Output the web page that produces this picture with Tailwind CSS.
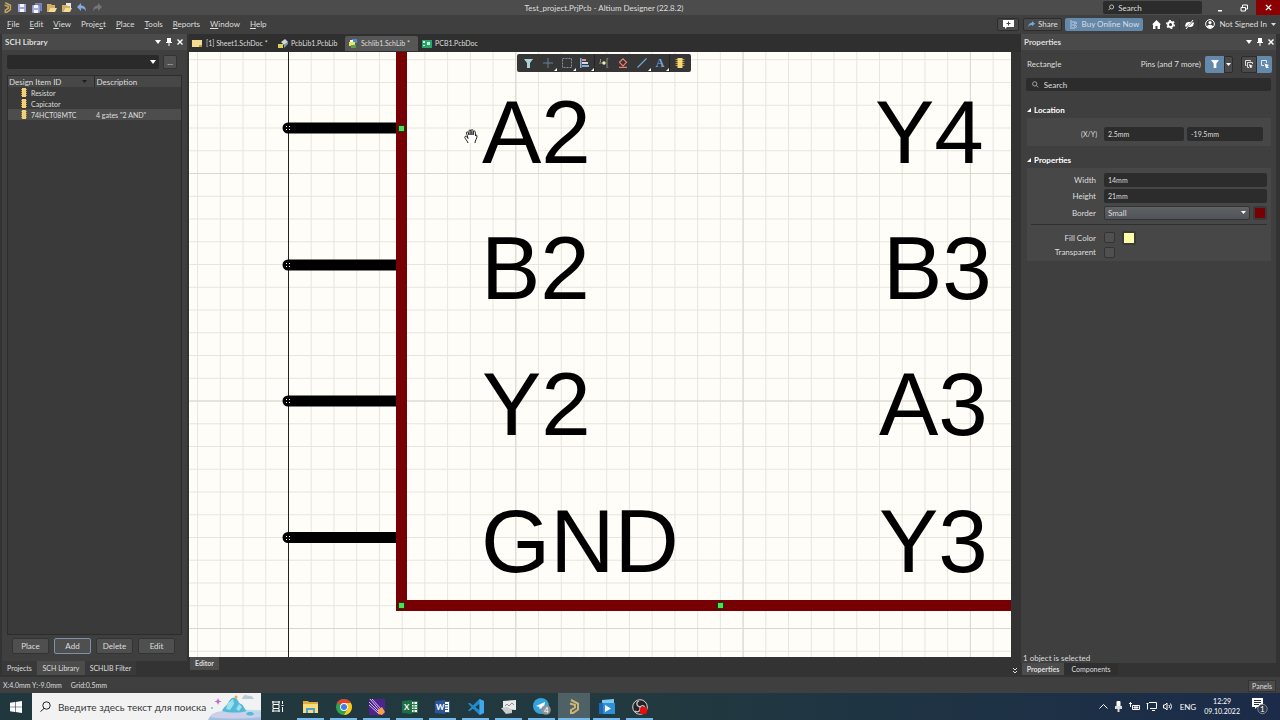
<!DOCTYPE html>
<html lang="en">
<head>
  <meta charset="UTF-8" />
  <meta name="viewport" content="width=device-width, initial-scale=1.0"/>
  <title>Test_project.PrjPcb - Altium Designer (22.8.2)</title>
  <script src="https://cdn.jsdelivr.net/npm/@tailwindcss/browser@4"></script>
</head>
<body class="flex h-screen flex-col overflow-hidden bg-[#3c3c3c] font-['Lato','Open_Sans',sans-serif] text-[8px] leading-[10px] text-[#dedede]">

  <!-- Title bar -->
  <header class="relative flex h-[15px] shrink-0 items-center bg-[#4c4c4c]">
    <div class="flex items-center gap-[5px] pl-[3px]">
      <svg class="h-[11px] w-[9px]" viewBox="0 0 12 15" fill="none" stroke="#c4a95c" stroke-width="2"><path d="M3 1l7 3.500v6L5 14H3v-3l4-2.500V6L2 4.500"/></svg>
      <button aria-label="Save"><svg class="size-[10px]" viewBox="0 0 10 10"><path fill="#a3a9dc" d="M1 1h8v8H1z"/><path fill="#f4f4fa" d="M3 1h4v3H3zM3 6h4v3H3z"/></svg></button>
      <button aria-label="Save all"><svg class="size-[10px]" viewBox="0 0 10 10"><path fill="#7d84c4" d="M3 0h7v8H3z"/><path fill="#a9aee2" stroke="#4c4c4c" stroke-width=".4" d="M0 2h8v8H0z"/><path fill="#f4f4fa" d="M2 2h4v3H2zM2 7h4v3H2z"/></svg></button>
      <button aria-label="Open"><svg class="size-[10px]" viewBox="0 0 10 10"><path fill="#d2b163" d="M0 1h4l1 1h3v3H3L1 9H0z"/><path fill="#f6dc93" d="M3 5h7L8 9H1z"/></svg></button>
      <button aria-label="Open project"><svg class="size-[10px]" viewBox="0 0 10 10"><path fill="#e8e8e8" d="M4 0h5v5H4z"/><path fill="#d2b163" d="M0 2h4l1 1h3v2H3L1 9H0z"/><path fill="#f6dc93" d="M3 5h7L8 9H1z"/></svg></button>
      <button aria-label="Undo"><svg class="size-[10px]" viewBox="0 0 10 10"><path fill="#7fabdf" d="M0 4l4-4v2.500c3 0 5 2 5 6C8 6 6.500 5.300 4 5.300V8z"/></svg></button>
      <button aria-label="Redo"><svg class="size-[10px]" viewBox="0 0 10 10"><path fill="#757575" d="M10 4L6 0v2.500c-3 0-5 2-5 6 1-2.500 2.500-3.200 5-3.200V8z"/></svg></button>
    </div>
    <h1 class="absolute inset-x-0 pr-[72px] text-center">Test_project.PrjPcb - Altium Designer (22.8.2)</h1>
    <div class="relative ml-auto flex h-full items-center">
      <label class="mr-[6px] flex h-[13px] w-[99px] items-center gap-[4px] rounded-xs bg-[#2c2c2c] px-[5px]">
        <svg class="size-[7px]" viewBox="0 0 8 8" fill="none" stroke="#dedede"><circle cx="4.700" cy="3.300" r="2.600"/><path d="M3 5L.5 7.500"/></svg>
        <input type="text" aria-label="Search application" placeholder="Search" class="w-full min-w-0 outline-none placeholder:text-[#dedede]">
      </label>
      <button aria-label="Minimize" class="flex h-full w-[24px] items-center justify-center"><svg class="size-[8px]" viewBox="0 0 8 8"><path fill="#fff" d="M2 6h4v1.500H2z"/></svg></button>
      <button aria-label="Restore" class="flex h-full w-[24px] items-center justify-center"><svg class="size-[8px]" viewBox="0 0 8 8" fill="none" stroke="#fff"><path d="M2.500 3V1h5v4H6M1 3.500h4.500V7H1z"/></svg></button>
      <button aria-label="Close" class="flex h-full w-[24px] items-center justify-center bg-[#8b0000]"><svg class="size-[7px]" viewBox="0 0 8 8" stroke="#fff" stroke-width="1.600"><path d="M1 1l6 6M7 1L1 7"/></svg></button>
    </div>
  </header>

  <!-- Menu bar -->
  <div class="flex h-[19px] shrink-0 items-center justify-between bg-[#3f3f3f]">
    <nav class="flex gap-[10px] pb-[2px] pl-[7px]">
      <a href="#"><u>F</u>ile</a>
      <a href="#"><u>E</u>dit</a>
      <a href="#"><u>V</u>iew</a>
      <a href="#">Proje<u>c</u>t</a>
      <a href="#"><u>P</u>lace</a>
      <a href="#"><u>T</u>ools</a>
      <a href="#"><u>R</u>eports</a>
      <a href="#"><u>W</u>indow</a>
      <a href="#"><u>H</u>elp</a>
    </nav>
    <div class="flex items-center pb-px">
      <button aria-label="Comments" class="flex h-[13px] w-[22px] items-center justify-center rounded-xs border border-[#2c2c2c] bg-[#4a4a4a]"><svg class="h-[9px] w-[11px]" viewBox="0 0 11 9"><path fill="#fff" d="M0 0h11v7H4L2 9V7H0z"/><path stroke="#444" d="M5.500 1.500v4M3.500 3.500h4"/></svg></button>
      <button class="ml-[4px] flex h-[13px] w-[39px] items-center justify-center gap-[3px] rounded-xs border border-[#2c2c2c] bg-[#4a4a4a]"><svg class="size-[7px]" viewBox="0 0 8 8"><path fill="#6ba7e0" d="M8 3L4.500 0v2C2 2 .5 4 0 7c1.500-2 2.500-2.500 4.500-2.500V6z"/></svg>Share</button>
      <button class="ml-[3px] flex h-[13px] w-[78px] items-center justify-center gap-[5px] rounded-xs bg-[#6589ab]"><svg class="h-[9px] w-[7px]" viewBox="0 0 7 9" fill="none" stroke="#b9cbdc"><path d="M1 0v9M2 2h3M2 5h3M2 8h3"/><circle cx="5.500" cy="3" r="1"/><circle cx="5.500" cy="6.500" r="1"/></svg>Buy Online Now</button>
      <button aria-label="Home" class="ml-[9px]"><svg class="size-[9px]" viewBox="0 0 9 9"><path fill="#fff" d="M4.500 0L9 4.500H8V9H5.500V6h-2v3H1V4.500H0z"/></svg></button>
      <button aria-label="Settings" class="ml-[5px]"><svg class="size-[9px]" viewBox="0 0 9 9" fill="none" stroke="#fff"><circle cx="4.500" cy="4.500" r="2.500" stroke-width="1.800"/><circle cx="4.500" cy="4.500" r="3.900" stroke-width="1.200" stroke-dasharray="2 2.080"/></svg></button>
      <span class="ml-[4px] h-[11px] w-px bg-[#333]"></span>
      <button aria-label="Extensions" class="ml-[5px]"><svg class="size-[9px]" viewBox="0 0 9 9"><path fill="#fff" d="M0 6l1-3 2-1h3L1 7zM9 3L8 6 6 7H3l5-5z"/><path stroke="#fff" d="M1 9l7-9"/></svg></button>
      <span class="ml-[4px] h-[11px] w-px bg-[#333]"></span>
      <button class="ml-[6px] flex items-center gap-[4px] pr-[4px]"><svg class="size-[10px]" viewBox="0 0 10 10"><circle cx="5" cy="5" r="4.400" fill="none" stroke="#fff"/><circle cx="5" cy="3.600" r="1.600" fill="#fff"/><path fill="#fff" d="M2 8c0-3 6-3 6 0L5 9.500z"/></svg>Not Signed In<svg class="h-[3px] w-[5px]" viewBox="0 0 5 3"><path fill="#dedede" d="M0 0h5L2.500 3z"/></svg></button>
    </div>
  </div>

  <main class="flex min-h-0 flex-1 bg-[#333333]">

    <!-- SCH Library panel -->
    <aside class="flex w-[187px] shrink-0 flex-col pl-[2px]">
      <div class="flex min-h-0 flex-1 flex-col bg-[#3f3f3f]">
        <div class="flex h-[16px] items-center gap-[5px] bg-[#4a4a4a] pr-[4px] pl-[3px]">
          <h2 class="mr-auto font-bold">SCH Library</h2>
          <button aria-label="Panel menu"><svg class="h-[4px] w-[6px]" viewBox="0 0 6 4"><path fill="#fff" d="M0 0h6L3 4z"/></svg></button>
          <button aria-label="Pin panel"><svg class="h-[8px] w-[6px]" viewBox="0 0 6 8"><path fill="#fff" d="M1 0h4v4h1v1H0V4h1zM2.500 5h1v3h-1z"/></svg></button>
          <button aria-label="Close panel"><svg class="size-[6px]" viewBox="0 0 6 6" stroke="#fff" stroke-width="1.400"><path d="M.5.5l5 5M5.500.5l-5 5"/></svg></button>
        </div>
        <div class="flex gap-[4px] px-[5px] pt-[5px]">
          <div class="relative h-[14px] w-[152px]">
            <select aria-label="Filter" class="size-full appearance-none rounded-xs bg-[#2a2a2a]"><option></option></select>
            <svg class="pointer-events-none absolute top-[5px] right-[3px] h-[4px] w-[6px]" viewBox="0 0 6 4"><path fill="#fff" d="M0 0h6L3 4z"/></svg>
          </div>
          <button class="h-[14px] w-[14px] rounded-xs border border-[#333] bg-[#505050]">...</button>
        </div>
        <div class="mx-[5px] mt-[6px] min-h-0 flex-1 border border-[#2c2c2c] bg-[#3a3a3a]">
          <table class="w-full table-fixed border-collapse text-left">
            <thead class="bg-[#474747]">
              <tr class="h-[11px]">
                <th class="w-[86px] p-0 pl-px font-normal"><span class="flex items-center justify-between pr-[7px]">Design Item ID<svg class="h-[3px] w-[5px]" viewBox="0 0 5 3"><path fill="#1c1c1c" d="M0 0h5L2.500 3z"/></svg></span></th>
                <th class="border-l border-[#2c2c2c] p-0 pl-[2px] font-normal">Description</th>
              </tr>
            </thead>
            <tbody id="components"></tbody>
          </table>
        </div>
        <div class="flex gap-[5px] py-[3px] pl-[10px]">
          <button class="h-[16px] w-[37px] rounded-xs border border-[#333] bg-[#4f4f4f]">Place</button>
          <button class="h-[16px] w-[37px] rounded-xs border border-[#7d92a8] bg-[#4f4f4f]">Add</button>
          <button class="h-[16px] w-[37px] rounded-xs border border-[#333] bg-[#4f4f4f]">Delete</button>
          <button class="h-[16px] w-[37px] rounded-xs border border-[#333] bg-[#4f4f4f]">Edit</button>
        </div>
        <div class="h-[4px]"></div>
      </div>
      <nav class="flex h-[16px] items-start text-[7px] leading-[14px]">
        <a href="#" class="w-[35px] bg-[#393939] text-center">Projects</a>
        <a href="#" class="w-[48px] bg-[#4c4c4c] text-center">SCH Library</a>
        <a href="#" class="w-[51px] bg-[#393939] text-center">SCHLIB Filter</a>
      </nav>
    </aside>

    <!-- Document area -->
    <section class="ml-[2px] flex min-w-0 flex-1 flex-col">
      <nav class="flex h-[18px] shrink-0 items-end bg-[#2f2f2f] text-[7px] leading-[15px]">
        <a href="#" class="mb-px flex w-[83px] items-center gap-[4px] pl-[3px]"><svg class="h-[7px] w-[10px]" viewBox="0 0 10 7"><path fill="#f3dc8b" d="M0 0h10v7H0z"/><path fill="#b99c4c" d="M7 5h3v2H7z"/></svg>[1] Sheet1.SchDoc *</a>
        <a href="#" class="mb-px flex w-[73px] items-center gap-[3px] pl-[6px]"><svg class="size-[10px]" viewBox="0 0 10 10"><path fill="#cfd6d8" d="M3 3l4-3 3 3-4 3z"/><path fill="#7f9aa0" d="M6 6l4-3v2L6 9z"/><path fill="#d9cf58" d="M0 5h5v4H0z"/></svg>PcbLib1.PcbLib</a>
        <a href="#" class="mb-px flex w-[73px] items-center gap-[3px] rounded-t-xs bg-[#565656] pl-[4px]"><svg class="size-[9px]" viewBox="0 0 9 9"><path fill="#4e8bd0" d="M3 0h5v4H3z"/><path fill="#ece45f" d="M0 3h6v4H0z"/><path fill="#56a04e" d="M2 6h5v3H2z"/><path fill="#fff" d="M1 1h3v2H1z"/></svg>Schlib1.SchLib *</a>
        <a href="#" class="mb-px flex items-center gap-[3px] pl-[4px]"><svg class="h-[8px] w-[10px]" viewBox="0 0 10 8"><path fill="#27a56a" d="M0 0h10v8H0z"/><path fill="#c6f0dc" d="M1 1h2v2H1zM5 2h3v3H5zM1 5h2v1H1z"/></svg>PCB1.PcbDoc</a>
      </nav>
      <div class="relative mr-[10px] min-h-0 flex-1 bg-[#fefdf8]">
        <!-- Schematic sheet -->
        <svg class="block size-full font-['Liberation_Sans',sans-serif]">
          <defs>
            <pattern id="minor" x="99" y="121" width="22.730" height="22.750" patternUnits="userSpaceOnUse"><path d="M0 .5h23M.5 0v23" stroke="#e9e5de" fill="none"/></pattern>
            <pattern id="major" x="99" y="121" width="227.300" height="227.500" patternUnits="userSpaceOnUse"><path d="M0 .5h228M.5 0v228" stroke="#dad7d0" fill="none"/></pattern>
          </defs>
          <rect width="100%" height="100%" fill="url(#minor)"/>
          <rect width="100%" height="100%" fill="url(#major)"/>
          <rect x="99" width="1" height="100%" fill="#222"/>
          <g stroke="#000" stroke-width="11" stroke-linecap="round">
            <path d="M99 76h108M99 213h108M99 349h108M99 485.500h108"/>
          </g>
          <g fill="#fff">
            <path d="M97 74h1v1h-1zm3 0h1v1h-1zm-3 3h1v1h-1zm3 0h1v1h-1z"/>
            <path d="M97 211h1v1h-1zm3 0h1v1h-1zm-3 3h1v1h-1zm3 0h1v1h-1z"/>
            <path d="M97 347h1v1h-1zm3 0h1v1h-1zm-3 3h1v1h-1zm3 0h1v1h-1z"/>
            <path d="M97 484h1v1h-1zm3 0h1v1h-1zm-3 3h1v1h-1zm3 0h1v1h-1z"/>
          </g>
          <path fill="#760003" d="M207 0h11v548h2000v11H207z"/>
          <g fill="#4fe052" stroke="#123c10">
            <rect x="209.500" y="73.500" width="6" height="6"/>
            <rect x="209.500" y="550.500" width="6" height="6"/>
            <rect x="528.500" y="550.500" width="6" height="6"/>
          </g>
          <g font-size="89">
            <text x="293" y="111">A2</text>
            <text x="292" y="247">B2</text>
            <text x="293" y="383">Y2</text>
            <text x="292" y="520">GND</text>
            <text x="686" y="111">Y4</text>
            <text x="694" y="247">B3</text>
            <text x="690" y="383">A3</text>
            <text x="690" y="520">Y3</text>
          </g>
          <!-- Pan cursor -->
          <path transform="translate(275 77)" fill="#fff" stroke="#222" d="M4 14C3 11 0 9 1 7.500c1-.8 2 .5 3 2L2.500 4c0-1.500 1.500-1.500 2 0L5 6V2c0-1.500 2-1.500 2 0v4-4.500c.5-1.300 2-1 2 0V6l.5-3.500c.5-1 2-.5 1.800.7L11.500 7c.5-1.200 1.500-1 1.500 0 0 3-2 4-2 7"/>
        </svg>

        <!-- Active bar floating over the sheet -->
        <div class="absolute top-[2px] left-1/2 flex h-[18px] -translate-x-[83px] items-center rounded-xs bg-[#363636] px-[2px]">
          <button aria-label="Filter" class="flex h-[18px] w-[19px] items-center justify-center"><svg class="size-[9px]" viewBox="0 0 9 9"><path fill="#a8d4d8" d="M0 0h9L6 4v5H3V4z"/></svg></button>
          <button aria-label="Move" class="relative flex h-[18px] w-[19px] items-center justify-center"><svg class="size-[10px]" viewBox="0 0 10 10" stroke="#62829f"><path d="M5 0v10M0 5h10"/></svg><i class="absolute right-0 bottom-px size-[3px] bg-white [clip-path:polygon(100%_0,100%_100%,0_100%)]"></i></button>
          <button aria-label="Select" class="relative flex h-[18px] w-[19px] items-center justify-center"><svg class="size-[10px]" viewBox="0 0 10 10" fill="none" stroke="#7f92a5" stroke-dasharray="2 1"><path d="M.5.5h9v9h-9z"/></svg><i class="absolute right-0 bottom-px size-[3px] bg-white [clip-path:polygon(100%_0,100%_100%,0_100%)]"></i></button>
          <button aria-label="Align" class="relative flex h-[18px] w-[19px] items-center justify-center border-r border-[#242424]"><svg class="size-[10px]" viewBox="0 0 10 10"><path fill="#86aede" d="M0 0h1.500v10H0zM2 7h7v2H2z"/><path fill="#e58a97" d="M2 1h4v2H2z"/><path fill="#d7d9e8" d="M2 4h6v2H2z"/></svg><i class="absolute right-0 bottom-px size-[3px] bg-white [clip-path:polygon(100%_0,100%_100%,0_100%)]"></i></button>
          <button aria-label="Place pin" class="flex h-[18px] w-[18px] items-center justify-center"><svg class="size-[10px]" viewBox="0 0 10 10" fill="none" stroke="#8d8d82"><path d="M0 5h5M9.500 0H8v10h1.500M1.500 1v3"/><circle cx="5" cy="5" r="1.700" fill="#f5efa8" stroke="none"/></svg></button>
          <button aria-label="IEEE symbol" class="flex h-[18px] w-[19px] items-center justify-center"><svg class="size-[10px]" viewBox="0 0 10 10" fill="none" stroke="#ef7d6c" stroke-width="1.200"><path d="M5 .8L8.500 4.300 5 7.800 1.500 4.300zM1 9.300h8"/></svg></button>
          <button aria-label="Line" class="relative flex h-[18px] w-[19px] items-center justify-center"><svg class="size-[10px]" viewBox="0 0 10 10" stroke="#6ea6dc" stroke-width="1.200"><path d="M.5 9.500l9-9"/></svg><i class="absolute right-0 bottom-px size-[3px] bg-white [clip-path:polygon(100%_0,100%_100%,0_100%)]"></i></button>
          <button aria-label="Text string" class="relative flex h-[18px] w-[19px] items-center justify-center border-r border-[#242424] font-['Liberation_Serif',serif] text-[12px] font-bold text-[#6ea6dc]">A<i class="absolute right-0 bottom-px size-[3px] bg-white [clip-path:polygon(100%_0,100%_100%,0_100%)]"></i></button>
          <button aria-label="Add part" class="flex h-[18px] w-[19px] items-center justify-center"><svg class="size-[10px]" viewBox="0 0 10 10"><path stroke="#b9923c" stroke-dasharray="1 1" stroke-width="9" d="M5 1v8"/><path fill="#f3d878" d="M2.500 0h5v10h-5z"/></svg></button>
        </div>
      </div>
      <div class="flex h-[20px] shrink-0 items-start justify-between text-[7px] leading-[13px]">
        <a href="#" class="ml-px w-[29px] bg-[#4c4c4c] text-center font-bold">Editor</a>
        <button aria-label="More" class="mt-[11px] mr-[3px]"><svg class="size-[6px]" viewBox="0 0 6 6" fill="none" stroke="#dedede"><path d="M1 0l2 2 2-2M1 3l2 2 2-2"/></svg></button>
      </div>
    </section>

    <!-- Properties panel -->
    <aside class="flex w-[259px] shrink-0 flex-col pr-[4px]">
      <div class="flex min-h-0 flex-1 flex-col bg-[#3f3f3f]">
        <div class="flex h-[16px] items-center gap-[5px] bg-[#4a4a4a] pr-[2px] pl-[3px]">
          <h2 class="mr-auto font-bold">Properties</h2>
          <button aria-label="Panel menu"><svg class="h-[4px] w-[6px]" viewBox="0 0 6 4"><path fill="#fff" d="M0 0h6L3 4z"/></svg></button>
          <button aria-label="Pin panel"><svg class="h-[8px] w-[6px]" viewBox="0 0 6 8"><path fill="#fff" d="M1 0h4v4h1v1H0V4h1zM2.500 5h1v3h-1z"/></svg></button>
          <button aria-label="Close panel"><svg class="size-[6px]" viewBox="0 0 6 6" stroke="#fff" stroke-width="1.400"><path d="M.5.5l5 5M5.500.5l-5 5"/></svg></button>
        </div>
        <div class="flex h-[28px] items-center pr-[4px] pl-[6px]">
          <span class="mr-auto">Rectangle</span>
          <span>Pins (and 7 more)</span>
          <button aria-label="Filter objects" class="ml-[4px] flex h-[17px] w-[19px] items-center justify-center rounded-l-xs bg-[#6589ab]"><svg class="size-[8px]" viewBox="0 0 9 9"><path fill="#fff" d="M0 0h9L6 4v5H3V4z"/></svg></button>
          <button aria-label="Filter options" class="flex h-[17px] w-[9px] items-center justify-center rounded-r-xs border border-[#2c2c2c] bg-[#4a4a4a]"><svg class="h-[3px] w-[5px]" viewBox="0 0 5 3"><path fill="#fff" d="M0 0h5L2.500 3z"/></svg></button>
          <button aria-label="Select all" class="ml-[8px] flex h-[17px] w-[16px] items-center justify-center rounded-l-xs border border-[#2c2c2c] bg-[#4a4a4a]"><svg class="size-[8px]" viewBox="0 0 8 8" fill="none" stroke="#dedede"><path d="M5.500 1.500v-1h-5v5h1M2.500 2.500h5V4M2.500 2.500v5H4"/><path fill="#fff" stroke="none" d="M4 4l4 2-1.500.5L7 8 6 7.500 5 8z"/></svg></button>
          <button aria-label="Select touching" class="flex h-[17px] w-[15px] items-center justify-center rounded-r-xs bg-[#6589ab]"><svg class="size-[8px]" viewBox="0 0 8 8" fill="none" stroke="#dfe9f2"><path d="M3 5.500H.5v-5h5V3"/><path fill="#fff" stroke="none" d="M3.500 3.500L8 5 6.500 6 8 8H5z"/></svg></button>
        </div>
        <label class="mx-[5px] flex h-[13px] items-center gap-[5px] rounded-xs bg-[#2c2c2c] px-[6px]">
          <svg class="size-[7px]" viewBox="0 0 8 8" fill="none" stroke="#b5b5b5"><circle cx="3.300" cy="3.300" r="2.600"/><path d="M5 5l2.500 2.500"/></svg>
          <input type="text" aria-label="Search properties" placeholder="Search" class="w-full min-w-0 outline-none placeholder:text-[#dedede]">
        </label>

        <h3 class="mt-[14px] ml-[6px] flex items-center gap-[3px] font-bold text-white"><svg class="size-[4px]" viewBox="0 0 4 4"><path fill="#fff" d="M4 0v4H0z"/></svg>Location</h3>
        <div class="mt-[3px] mr-[5px] ml-[6px] flex h-[28px] items-center bg-[#474747] pt-[3px] pr-[8px] text-[7px]">
          <label for="loc-x" class="w-[77px] pr-[7px] text-right">(X/Y)</label>
          <input id="loc-x" type="text" value="2.5mm" class="h-[14px] w-[80px] rounded-xs bg-[#2c2c2c] px-[4px]">
          <input aria-label="Y" type="text" value="-19.5mm" class="ml-[3px] h-[14px] w-0 flex-1 rounded-xs bg-[#2c2c2c] px-[4px]">
        </div>

        <h3 class="mt-[9px] ml-[6px] flex items-center gap-[3px] font-bold text-white"><svg class="size-[4px]" viewBox="0 0 4 4"><path fill="#fff" d="M4 0v4H0z"/></svg>Properties</h3>
        <div class="mt-[3px] mr-[5px] ml-[6px] bg-[#474747] pt-[5px] pr-[4px] pb-[2px]">
          <div class="flex h-[16px] items-start leading-[14px]">
            <label for="width" class="w-[77px] pr-[8px] text-right">Width</label>
            <input id="width" type="text" value="14mm" class="h-[14px] w-0 flex-1 rounded-xs bg-[#2c2c2c] px-[4px] text-[7px]">
          </div>
          <div class="flex h-[16px] items-start leading-[14px]">
            <label for="height" class="w-[77px] pr-[8px] text-right">Height</label>
            <input id="height" type="text" value="21mm" class="h-[14px] w-0 flex-1 rounded-xs bg-[#2c2c2c] px-[4px] text-[7px]">
          </div>
          <div class="flex h-[19px] items-start pt-px leading-[14px]">
            <label for="border" class="w-[77px] pr-[8px] text-right">Border</label>
            <div class="relative flex-1">
              <select id="border" class="block h-[14px] w-full appearance-none rounded-xs border border-[#333] bg-linear-to-b from-[#5d6266] to-[#505458] px-[3px] leading-[12px]"><option>Small</option></select>
              <svg class="pointer-events-none absolute top-[5px] right-[4px] h-[3px] w-[5px]" viewBox="0 0 5 3"><path fill="#fff" d="M0 0h5L2.500 3z"/></svg>
            </div>
            <button aria-label="Border color" class="ml-[3px] size-[14px] rounded-xs border-2 border-[#3a3a3a] bg-[#760003]"></button>
          </div>
          <hr class="ml-[4px] border-[#2f2f2f]">
          <div class="mt-[5px] flex h-[15px] items-center">
            <label for="fill" class="w-[77px] pr-[8px] text-right">Fill Color</label>
            <input id="fill" type="checkbox" class="size-[11px] appearance-none rounded-xs border border-[#333] bg-[#505050]">
            <button aria-label="Fill color" class="ml-[7px] size-[14px] rounded-xs border-2 border-[#3a3a3a] bg-[#ffffa8]"></button>
          </div>
          <div class="flex h-[14px] items-center">
            <label for="transparent" class="w-[77px] pr-[8px] text-right">Transparent</label>
            <input id="transparent" type="checkbox" class="size-[11px] appearance-none rounded-xs border border-[#333] bg-[#505050]">
          </div>
        </div>
        <p class="mt-auto ml-[2px]">1 object is selected</p>
      </div>
      <nav class="flex h-[14px] items-start pl-px text-[7px] leading-[12px]">
        <a href="#" class="w-[42px] bg-[#4c4c4c] text-center font-bold">Properties</a>
        <a href="#" class="w-[54px] bg-[#2f2f2f] text-center">Components</a>
      </nav>
    </aside>
  </main>

  <!-- Status bar -->
  <div class="flex h-[16px] shrink-0 items-center bg-[#3f3f3f] text-[7px]">
    <span class="pl-[3px]">X:4.0mm Y:-9.0mm</span>
    <span class="pl-[9px]">Grid:0.5mm</span>
    <button class="mt-[2px] mr-[4px] ml-auto h-[12px] w-[28px] border border-[#333] bg-[#4c4c4c] text-[7px] leading-[10px]">Panels</button>
  </div>

  <!-- Windows taskbar -->
  <footer class="flex h-[27px] shrink-0 items-center bg-linear-to-r from-[#1f373d] via-[#22393f] to-[#1b2b49] text-white">
    <button aria-label="Start" class="flex h-full w-[32px] items-center justify-center"><svg class="size-[12px]" viewBox="0 0 12 12"><path fill="#fff" d="M0 1.700L5 1v4.700H0zM5.600.9L12 0v5.700H5.600zM0 6.300h5V11l-5-.7zM5.600 6.300H12V12l-6.400-.9z"/></svg></button>
    <label class="flex h-full w-[229px] items-center bg-[#f2f2f2] pl-[8px] text-[#333]">
      <svg class="size-[11px] shrink-0" viewBox="0 0 11 11" fill="none" stroke="#222"><circle cx="6.500" cy="4.500" r="3.700"/><path d="M4 7.500L.5 10.500"/></svg>
      <input type="text" aria-label="Поиск" placeholder="Введите здесь текст для поиска" class="ml-[7px] w-0 flex-1 text-[10px] leading-[14px] outline-none placeholder:text-[#3a3a3a]">
      <svg class="h-[27px] w-[53px] shrink-0" viewBox="0 0 53 27">
        <defs><linearGradient id="sea" x2="0" y2="1"><stop stop-color="#bfe3f2"/><stop offset="1" stop-color="#9dbdde"/></linearGradient></defs>
        <path fill="url(#sea)" d="M0 27c3-7 8-8 14-9 12-2 26-1 39-1v10z"/>
        <path fill="#cfd0e8" d="M4 21c12-3 20 1 30-1s14 0 19 1v3c-20 2-35 2-50 0z"/>
        <path fill="#55b8d8" d="M14 18c2-5 4-4 6-8s4-6 7-5c3 0 3 5 6 6s3 5 6 7c-8 2-17 2-25 0z"/>
        <path fill="#9be0ec" d="M20 10l5-4 1 5-4 6-4-1zM31 11l3 3-3 4-3-2z"/>
        <path fill="#55b8d8" d="M38 21c2-3 6-3 8 0-2 2-6 2-8 0z"/>
        <path fill="#b9cbd4" d="M34 6c1-4 4-5 6-3 3-1 5 1 6 3z"/>
        <path fill="#c06bd3" d="M10 5l1 2.500 2.500 1-2.500 1-1 2.500-1-2.500-2.500-1 2.500-1z"/>
        <circle cx="28" cy="4" r="1.500" fill="#e8a54a"/><circle cx="4" cy="15" r="1" fill="#6bc9b4"/>
      </svg>
    </label>
    <button aria-label="Task view" class="flex h-full w-[33px] items-center justify-center"><svg class="h-[11px] w-[12px]" viewBox="0 0 12 11" fill="none" stroke="#fff"><path d="M0 1h8M0 10h8M1 3.500h6v4H1zM1 0v3M7 0v3M1 8v3M7 8v3M10.500 0v3M10.500 6v5"/><path d="M9.500 4.500h2"/></svg></button>
    <nav class="flex h-full">
      <button aria-label="File Explorer" class="mx-[3px] flex w-[27px] items-center justify-center border-b-2 border-[#76b9ed] pt-[2px]"><svg class="h-[13px] w-[15px]" viewBox="0 0 15 13"><path fill="#e3ab3c" d="M0 1h5l1 1h9v10H0z"/><path fill="#fbdc7b" d="M0 4h15v9H0z"/><path fill="#4ba2d6" d="M3 13V8h9v5h-2v-3H5v3z"/></svg></button>
      <button aria-label="Chrome" class="mx-[3px] flex w-[27px] items-center justify-center border-b-2 border-[#76b9ed] pt-[2px]"><svg class="size-[16px]" viewBox="0 0 16 16"><circle cx="8" cy="8" r="8" fill="#2fa350"/><path fill="#e5432f" d="M8 8L1.100 4A8 8 0 0 1 14.900 4z"/><path fill="#fbc91f" d="M8 4h6.900A8 8 0 0 1 8 16l3.500-6z"/><circle cx="8" cy="8" r="3.900" fill="#fff"/><circle cx="8" cy="8" r="3" fill="#3f7fe8"/></svg></button>
      <button aria-label="Flow" class="mx-[3px] flex w-[27px] items-center justify-center border-b-2 border-[#76b9ed] pt-[2px]"><svg class="size-[16px]" viewBox="0 0 16 16"><path fill="#4d2490" d="M0 0h16v16H0z"/><path stroke="#eecdf5" stroke-width=".9" d="M1 0l11 13M3 0l9 10M0 3l10 10M0 6l9 8"/><path fill="#f4a24e" d="M9 11l4-3 3 5-3 3-4-1z"/></svg></button>
      <button aria-label="Excel" class="mx-[3px] flex w-[27px] items-center justify-center border-b-2 border-[#76b9ed] pt-[2px]"><svg class="h-[14px] w-[16px]" viewBox="0 0 16 14"><path fill="#fff" stroke="#237c49" d="M7.500 1.500h8v11h-8z"/><path stroke="#237c49" d="M8 4.500h7M8 7h7M8 9.500h7M12 2v10"/><path fill="#1d7044" d="M0 1l10-1v14L0 13z"/><text x="2" y="10" font-size="8" font-weight="700" fill="#fff">X</text></svg></button>
      <button aria-label="Word" class="mx-[3px] flex w-[27px] items-center justify-center border-b-2 border-[#76b9ed] pt-[2px]"><svg class="h-[14px] w-[16px]" viewBox="0 0 16 14"><path fill="#fff" stroke="#2b569a" d="M7.500 1.500h7v11h-7z"/><path stroke="#2b569a" d="M8 4.500h5M8 7h5M8 9.500h5"/><path fill="#2b569a" d="M0 1l10-1v14L0 13z"/><text x="1" y="10" font-size="8" font-weight="700" fill="#fff">W</text></svg></button>
      <button aria-label="VS Code" class="mx-[3px] flex w-[27px] items-center justify-center border-b-2 border-[#76b9ed] pt-[2px]"><svg class="size-[16px]" viewBox="0 0 16 16"><path fill="#2489ca" fill-rule="evenodd" d="M11.500 0L5 6.300 1.500 3.700 0 4.500 3.500 8 0 11.500l1.500.8L5 9.700l6.500 6.300 4.500-2V2zM11.500 4.700v6.600L7.300 8z"/><path fill="#3fa8ea" d="M11.500 0L16 2v12l-4.500 2z"/></svg></button>
      <button aria-label="Task monitor" class="mx-[3px] flex w-[27px] items-center justify-center border-b-2 border-[#76b9ed] pt-[2px]"><svg class="h-[14px] w-[15px]" viewBox="0 0 15 14"><path fill="#e9eaea" d="M2 1l13-1v10L2 9z"/><path fill="#c8cccd" d="M0 8l6-1 5 3v3l-6 1z"/><path stroke="#8a9092" fill="none" d="M4 6l2-2 2 2 3-3 2 2"/></svg></button>
      <button aria-label="Telegram" class="mx-[3px] flex w-[27px] items-center justify-center border-b-2 border-[#76b9ed] pt-[2px]"><svg class="h-[17px] w-[18px]" viewBox="0 0 18 17"><circle cx="8" cy="8" r="8" fill="#34a3dc"/><path fill="#fff" d="M3 8l9-4-1.500 8L8 10l-1.500 1.500V9z"/><circle cx="13" cy="12" r="4.800" fill="#8e9396"/><text x="11" y="15" font-size="8" fill="#fff">4</text></svg></button>
      <button aria-label="Altium Designer" class="flex w-[32px] items-center justify-center border-b-2 border-[#76b9ed] bg-[#4d6166] pt-[2px]"><svg class="h-[15px] w-[12px]" viewBox="0 0 12 15" fill="none" stroke="#cdb673" stroke-width="2"><path d="M3 1l7 3.500v6L5 14H3v-3l4-2.500V6L2 4.500"/></svg></button>
      <button aria-label="Movies" class="mx-[3px] flex w-[27px] items-center justify-center border-b-2 border-[#76b9ed] pt-[2px]"><svg class="h-[15px] w-[16px]" viewBox="0 0 16 15"><path fill="#7cc9f2" d="M3 1l12-1v4H3z"/><path fill="#2f8fd8" d="M0 4h16v11H0z"/><path fill="#1c68b8" d="M0 4h4v11H0z"/><path fill="#fff" d="M6 6l6 3.500L6 13z"/></svg></button>
      <button aria-label="OBS Studio" class="mx-[3px] flex w-[27px] items-center justify-center border-b-2 border-[#76b9ed] pt-[2px]"><svg class="size-[16px]" viewBox="0 0 16 16"><circle cx="8" cy="8" r="7.300" fill="#252326" stroke="#d4d4d4"/><path fill="none" stroke="#c8c8c8" stroke-width="1.300" d="M8 8C4 7 4 3 7 2M8 8c3-3 6 0 5 3M8 8c1 4-2 6-5 4"/><circle cx="11.500" cy="11.500" r="3.700" fill="#f00a0a"/></svg></button>
    </nav>
    <div class="ml-auto flex h-full items-center">
      <div class="flex items-center gap-[6px]">
        <svg class="h-[5px] w-[9px]" viewBox="0 0 9 5" fill="none" stroke="#fff"><path d="M.5 4.500l4-4 4 4"/></svg>
        <svg class="h-[11px] w-[9px]" viewBox="0 0 9 11"><rect x="2.500" width="4" height="7" rx="1" fill="#fff"/><path fill="#ddd" d="M1 5h7v3H5.500v3h-2V8H1z"/></svg>
        <svg class="h-[9px] w-[11px]" viewBox="0 0 11 9" fill="none" stroke="#fff"><path d="M3.500 3.500h7v4h-7zM0 1.500h3M1.500 0v5"/><path fill="#fff" d="M5 5h4v1H5z"/></svg>
        <svg class="h-[9px] w-[11px]" viewBox="0 0 11 9" fill="none" stroke="#fff"><path d="M3 .5h7.500v6H4M6 8.500h3M.5 1.500h2M1.500 1v6.500"/></svg>
        <svg class="h-[9px] w-[10px]" viewBox="0 0 10 9" fill="none" stroke="#fff"><path d="M.5 3v3H2l2 2V1L2 3zM6 3q1 1.500 0 3M7.500 1.500q2 3 0 6"/></svg>
      </div>
      <span class="ml-[7px]">ENG</span>
      <time class="ml-[8px] pb-[2px] text-center text-[7px] leading-[10px]">12:29<br>09.10.2022</time>
      <button aria-label="Notifications" class="mr-[12px] ml-[12px]"><svg class="h-[17px] w-[16px]" viewBox="0 0 16 17"><path fill="#fff" d="M0 0h11v9H5l-2 2V9H0z"/><path stroke="#1b2b49" d="M2 2.500h7M2 4.500h7M2 6.500h5"/><circle cx="10.500" cy="11" r="4.700" fill="#2a3545" stroke="#aaa" stroke-width=".7"/><text x="8" y="14" font-size="8" fill="#fff">1</text></svg></button>
    </div>
  </footer>

  <script>
    const components = [
      { name: 'Resistor', description: '' },
      { name: 'Capicator', description: '' },
      { name: '74HCT08MTC', description: '4 gates "2 AND"', selected: true },
    ];

    document.getElementById('components').innerHTML = components.map(c => `
      <tr class="h-[11px] ${c.selected ? 'bg-[#4d4d4d]' : ''}">
        <td class="p-0 pl-[13px]"><span class="flex items-center gap-[4px] text-[7px]">
          <svg class="h-[9px] w-[6px]" viewBox="0 0 6 9"><path stroke="#b9923c" stroke-dasharray="1 1" stroke-width="6" d="M3 1v7"/><path fill="#f3d07a" d="M1 0h4v9H1z"/></svg>${c.name}</span></td>
        <td class="p-0 pl-[2px] text-[7px]">${c.description}</td>
      </tr>
    `).join('');
  </script>
</body>
</html>
